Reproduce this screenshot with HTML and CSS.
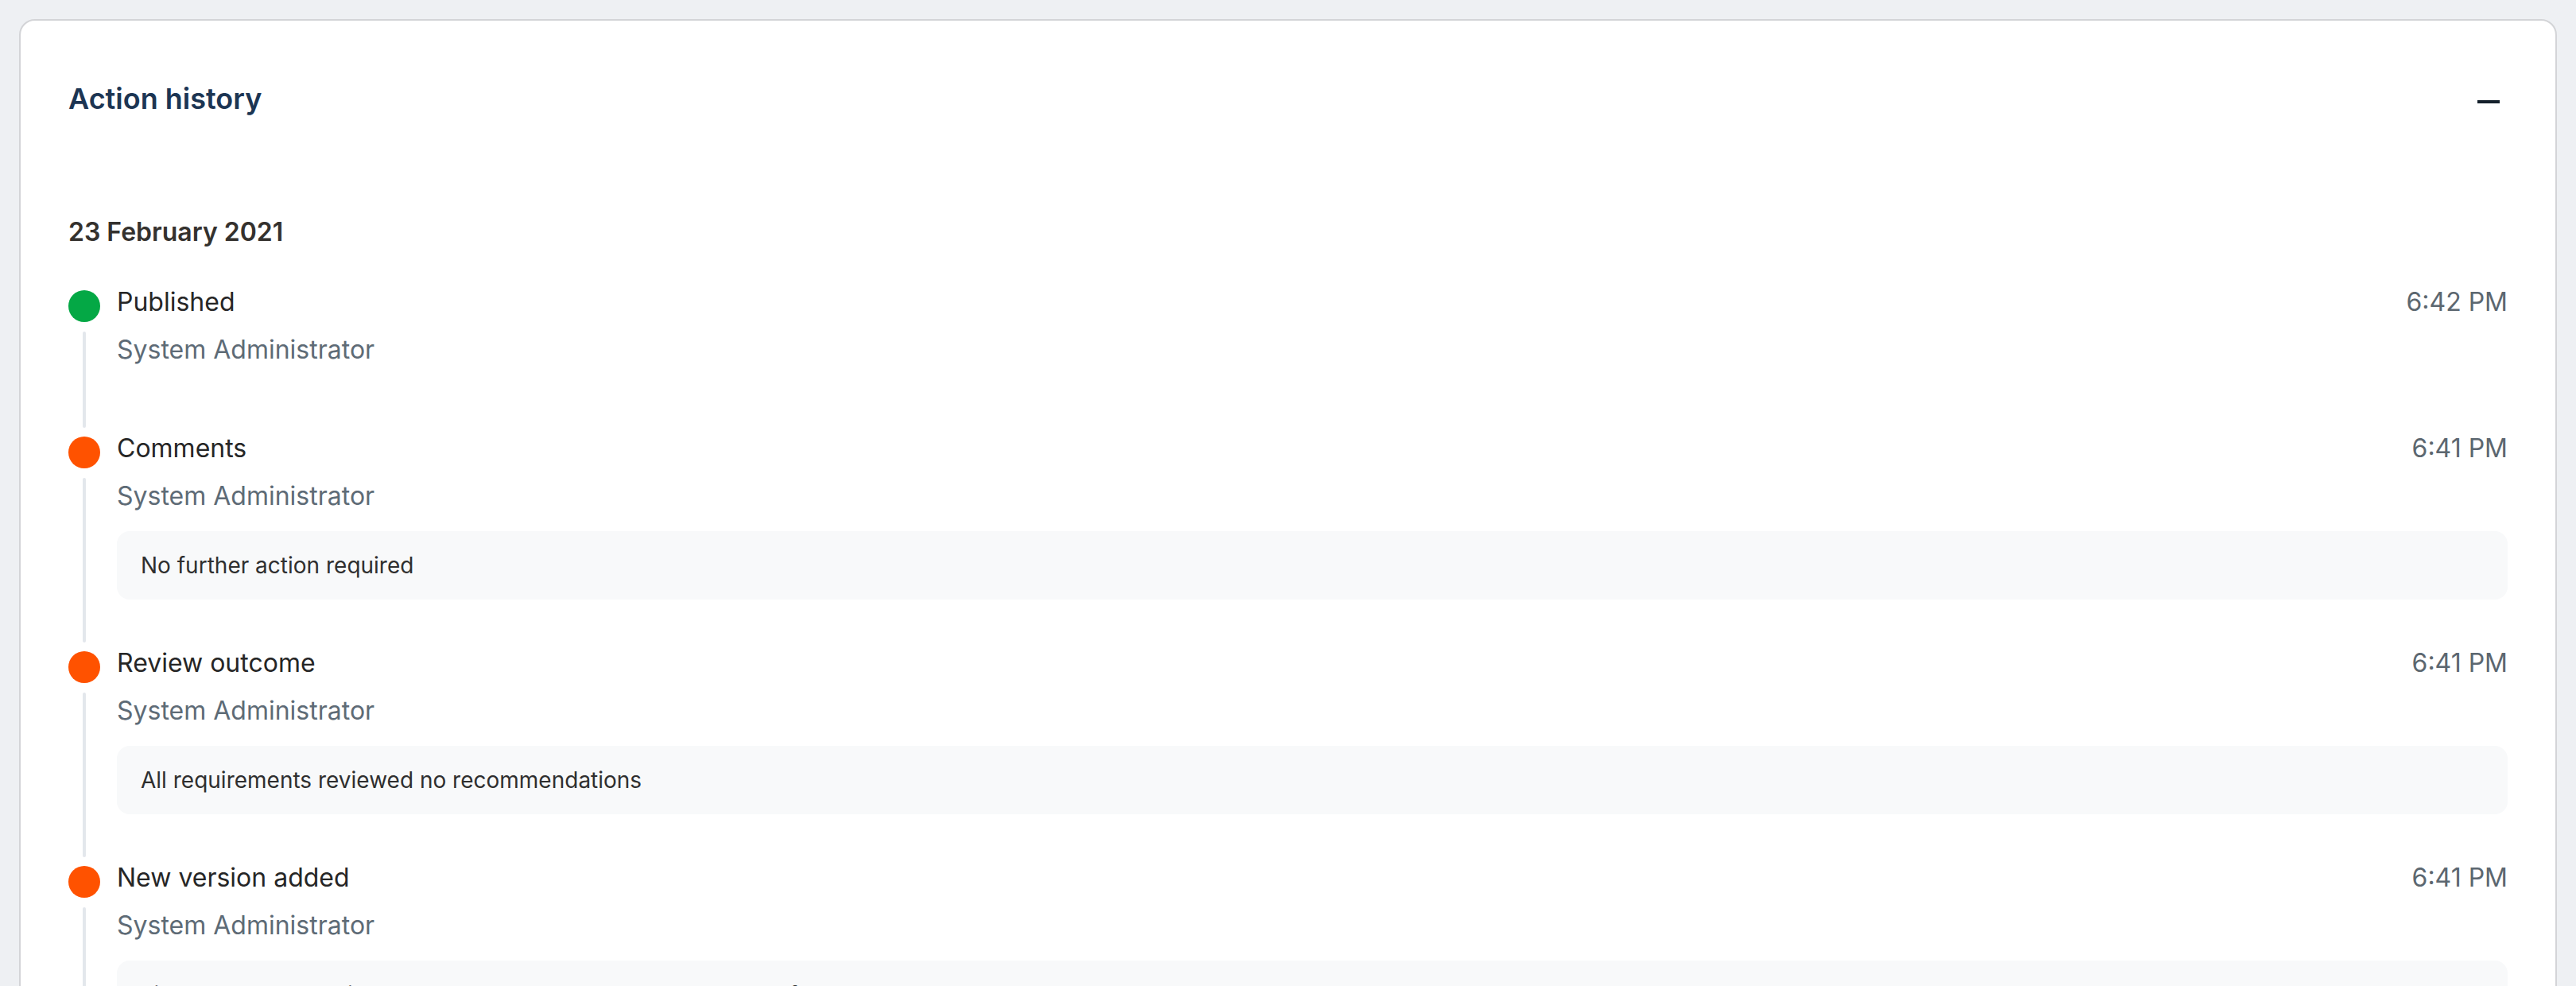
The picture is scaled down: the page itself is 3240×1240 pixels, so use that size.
FILE: index.html
```html
<!DOCTYPE html>
<html lang="en">
<head>
<meta charset="utf-8">
<title>Action history</title>
<link rel="stylesheet" href="styles.css">
</head>
<body>
<section class="card">
  <header class="card-header">
    <h2 class="card-title">Action history</h2>
    <button class="collapse-btn" type="button" aria-label="Collapse"><span class="minus"></span></button>
  </header>
  <div class="day">
    <h3 class="day-title">23 February 2021</h3>
    <ol class="timeline">
      <li class="event">
        <div class="rail"><span class="dot dot-green"></span><span class="line"></span></div>
        <div class="event-body">
          <div class="event-head"><span class="event-title">Published</span><span class="event-time">6:42 PM</span></div>
          <div class="event-user">System Administrator</div>
        </div>
      </li>
      <li class="event">
        <div class="rail"><span class="dot dot-orange"></span><span class="line"></span></div>
        <div class="event-body">
          <div class="event-head"><span class="event-title">Comments</span><span class="event-time">6:41 PM</span></div>
          <div class="event-user">System Administrator</div>
          <div class="event-note">No further action required</div>
        </div>
      </li>
      <li class="event">
        <div class="rail"><span class="dot dot-orange"></span><span class="line"></span></div>
        <div class="event-body">
          <div class="event-head"><span class="event-title">Review outcome</span><span class="event-time">6:41 PM</span></div>
          <div class="event-user">System Administrator</div>
          <div class="event-note">All requirements reviewed no recommendations</div>
        </div>
      </li>
      <li class="event">
        <div class="rail"><span class="dot dot-orange"></span><span class="line"></span></div>
        <div class="event-body">
          <div class="event-head"><span class="event-title">New version added</span><span class="event-time">6:41 PM</span></div>
          <div class="event-user">System Administrator</div>
          <div class="event-note">File uploaded: Funding Agreement between the Department of Health and Cleveland County 2021-2024.docx</div>
        </div>
      </li>
    </ol>
  </div>
</section>
</body>
</html>
```
FILE: styles.css
```css
html {
  overflow: hidden;
}
body {
  margin: 0;
  background: #eef0f3;
  font-family: Inter, "Noto Sans", sans-serif;
  color: #262626;
}
.card {
  margin: 24px;
  background: #ffffff;
  border: 2px solid #d3d4d7;
  border-radius: 20px;
  padding: 76px 60px 80px;
}
.card-header {
  display: flex;
  justify-content: space-between;
  align-items: flex-start;
}
.card-title {
  margin: 0;
  font-size: 36px;
  line-height: 44px;
  font-weight: 600;
  color: #1c3553;
}
.collapse-btn {
  width: 48px;
  height: 48px;
  margin-top: 2px;
  padding: 0;
  border: 0;
  background: transparent;
  display: flex;
  align-items: center;
  justify-content: center;
}
.minus {
  display: block;
  width: 28px;
  height: 4px;
  background: #14202b;
}
.day {
  margin-top: 120px;
}
.day-title {
  margin: 0 0 48px;
  font-size: 32px;
  line-height: 40px;
  font-weight: 600;
  color: #34312e;
}
.timeline {
  list-style: none;
  margin: 0;
  padding: 0;
}
.event {
  display: grid;
  grid-template-columns: 40px 1fr;
  column-gap: 21px;
  padding-bottom: 60px;
}
.rail {
  display: flex;
  flex-direction: column;
  align-items: center;
  margin-bottom: -54px;
}
.dot {
  width: 40px;
  height: 40px;
  border-radius: 50%;
  margin-top: 5px;
  flex: none;
}
.dot-green {
  background: #04a845;
}
.dot-orange {
  background: #ff5200;
}
.line {
  flex: 1;
  width: 4px;
  margin-top: 12px;
  border-radius: 2px;
  background: #e3e7ec;
}
.event-body {
  min-width: 0;
}
.event-head {
  display: flex;
  justify-content: space-between;
  align-items: baseline;
  font-size: 32px;
  line-height: 40px;
}
.event-title {
  color: #262626;
}
.event-time {
  color: #5c6770;
}
.event-user {
  margin-top: 20px;
  margin-bottom: 24px;
  font-size: 32px;
  line-height: 40px;
  color: #5e6b76;
}
.event-note {
  background: #f8f9fa;
  border-radius: 16px;
  padding: 24px 30px;
  font-size: 28px;
  line-height: 38px;
  color: #2f2f2f;
}
```
